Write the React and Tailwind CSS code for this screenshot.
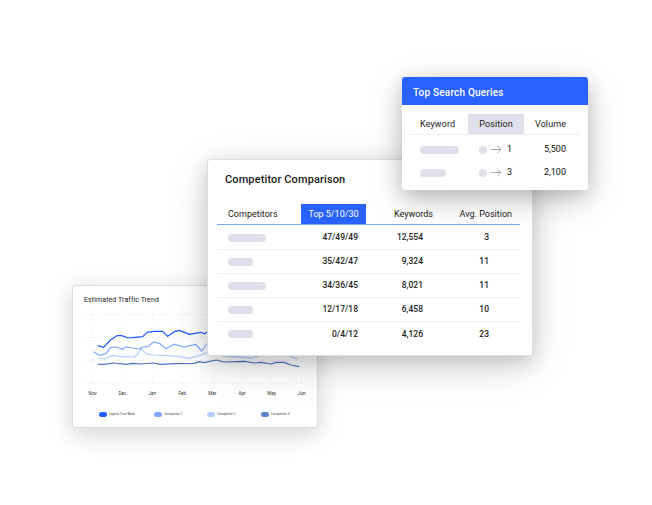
const font = { fontFamily: 'Roboto, "Liberation Sans", sans-serif' };

const competitors = [
  { pill: 'w-[38px]', top: '47/49/49', keywords: '12,554', avg: '3' },
  { pill: 'w-[25px]', top: '35/42/47', keywords: '9,324', avg: '11' },
  { pill: 'w-[38px]', top: '34/36/45', keywords: '8,021', avg: '11' },
  { pill: 'w-[25px]', top: '12/17/18', keywords: '6,458', avg: '10' },
  { pill: 'w-[25px]', top: '0/4/12', keywords: '4,126', avg: '23' },
];

const queries = [
  { pill: 'w-[39px]', pos: '1', volume: '5,500' },
  { pill: 'w-[26px]', pos: '3', volume: '2,100' },
];

const months = [
  ['Nov', 95], ['Dec', 184], ['Jan', 274], ['Feb', 364],
  ['Mar', 454], ['Apr', 543], ['May', 632], ['Jun', 722],
];

// points read off the reference at 3x, relative to (60,275)
const series = [
  {
    color: '#4d74c4',
    pts: [[110,268],[130,268],[155,264],[195,268],[215,265],[240,267],[275,264],[300,268],[340,266],[400,265],[415,260],[430,263],[465,255],[490,261],[550,259],[580,264],[600,262],[630,267],[645,262],[670,262],[690,270],[715,275]],
  },
  {
    color: '#b5cdff',
    pts: [[110,249],[130,252],[155,241],[180,245],[220,246],[230,238],[240,222],[255,236],[275,240],[310,241],[350,244],[385,250],[410,243],[440,233],[470,240],[500,245],[550,247],[570,250],[600,240],[685,240],[695,248],[710,252]],
  },
  {
    color: '#7fa9ff',
    pts: [[98,230],[115,241],[135,236],[148,218],[165,216],[185,223],[195,216],[235,222],[245,216],[260,215],[278,201],[295,205],[315,221],[340,208],[370,216],[405,208],[422,228],[440,204],[470,210]],
  },
  {
    color: '#1f5cff',
    pts: [[110,212],[128,217],[148,195],[168,182],[182,182],[202,189],[222,187],[245,185],[258,172],[280,169],[305,169],[320,184],[340,170],[355,166],[385,178],[420,172],[430,177],[445,165],[470,170]],
  },
];

const legend = [
  { label: 'Capital Trust Bank', color: 'bg-[#1f5cff]', w: 'w-[55px]' },
  { label: 'Competitor 1', color: 'bg-[#7fa9ff]', w: 'w-[53px]' },
  { label: 'Competitor 2', color: 'bg-[#b5cdff]', w: 'w-[54px]' },
  { label: 'Competitor 3', color: 'bg-[#5f82c9]', w: 'w-[50px]' },
];

const toX = (x) => x / 3 + 60;
const toY = (y) => y / 3 + 275;

function TrendChart() {
  return (
    <svg width="228" height="88" viewBox="84 310 228 88" className="ml-[12px] mt-[5px] block">
      {[118, 187, 256, 325].map((y) => (
        <line key={y} x1={toX(75)} x2={toX(740)} y1={toY(y)} y2={toY(y)} stroke="#d9d9dd" strokeWidth="0.6" strokeDasharray="1 2" />
      ))}
      {months.map(([m, x]) => (
        <line key={m} x1={toX(x)} x2={toX(x)} y1={toY(105)} y2={toY(325)} stroke="#e2e2e6" strokeWidth="0.6" strokeDasharray="1 2" />
      ))}
      {series.map((s) => (
        <polyline
          key={s.color}
          fill="none"
          stroke={s.color}
          strokeWidth="1.2"
          strokeLinejoin="round"
          points={s.pts.map(([x, y]) => `${toX(x)},${toY(y)}`).join(' ')}
        />
      ))}
      {months.map(([m, x]) => (
        <text key={m} x={toX(x)} y={394.5} textAnchor="middle" fontSize="4.6" fill="#333">{m}</text>
      ))}
    </svg>
  );
}

function SmallArrow() {
  return (
    <svg width="11" height="9" viewBox="0 0 11 9" fill="none" stroke="#9a9aa6" strokeWidth="0.9" className="ml-[4px] shrink-0">
      <path d="M0 4.5H10M6.2 0.8L10 4.5L6.2 8.2" />
    </svg>
  );
}

export default function App() {
  return (
    <div className="relative h-[505px] w-[652px] overflow-hidden bg-white" style={font}>
      {/* traffic chart card */}
      <div className="absolute left-[72px] top-[285px] h-[143px] w-[246px] rounded-[3px] border border-[#dcdcdc] bg-white shadow-[0_6px_24px_rgba(0,0,0,0.18)]">
        <div className="pl-[11px] pt-[9px] text-[7px] leading-[10px] tracking-[0.1px] text-[#222]">Estimated Traffic Trend</div>
        <TrendChart />
        <div className="ml-[26px] mt-[14px] flex">
          {legend.map((l) => (
            <div key={l.label} className={`flex items-center gap-[2px] ${l.w} shrink-0`}>
              <span className={`h-[5px] w-[8px] shrink-0 rounded-full ${l.color}`} />
              <span className="whitespace-nowrap text-[3.2px] leading-[5px] text-[#444]">{l.label}</span>
            </div>
          ))}
        </div>
      </div>

      {/* competitor table card */}
      <div className="absolute left-[207px] top-[159px] h-[197px] w-[326px] rounded-[3px] border border-[#dedede] bg-white pl-[9px] pr-[12px] shadow-[0_6px_18px_rgba(0,0,0,0.14),0_10px_40px_rgba(0,0,0,0.16)]">
        <div className="pl-[8px] pt-[13px] text-[11px] font-medium leading-[14px] tracking-[0.12px] text-[#1a1a1a]">Competitor Comparison</div>
        <div className="mt-[17px] grid grid-cols-[84px_65px_74px_80px] text-[9px] leading-[20px] text-[#222]">
          <div className="pl-[11px]">Competitors</div>
          <div className="bg-[#2962ff] text-center text-white">Top 5/10/30</div>
          <div className="pr-[7px] text-right">Keywords</div>
          <div className="pr-[8px] text-right">Avg. Position</div>
        </div>
        <div className="mb-[1px] h-[1px] bg-[#7fa5fb]" />
        {competitors.map((row, i) => (
          <div
            key={row.top}
            className={`grid h-[24px] grid-cols-[84px_65px_74px_80px] items-center text-[8.5px] font-medium text-[#222] ${i < competitors.length - 1 ? 'border-b border-[#eeeef3]' : ''}`}
          >
            <div className="pl-[11px]">
              <div className={`h-[8px] rounded-full bg-[#dfe0ea] ${row.pill}`} />
            </div>
            <div className="pr-[8px] text-right">{row.top}</div>
            <div className="pr-[17px] text-right">{row.keywords}</div>
            <div className="pr-[31px] text-right">{row.avg}</div>
          </div>
        ))}
      </div>

      {/* search queries card */}
      <div className="absolute left-[402px] top-[77px] h-[113px] w-[186px] overflow-hidden rounded-[3px] bg-white shadow-[0_6px_18px_rgba(0,0,0,0.16),0_10px_36px_rgba(0,0,0,0.18)]">
        <div className="flex h-[28px] items-center bg-[#2962ff] pl-[11px] pt-[3px] text-[10px] font-medium tracking-[0.2px] text-white">Top Search Queries</div>
        <div className="mx-[7px] mt-[9px]">
          <div className="grid grid-cols-[59px_56px_53px] border-b border-[#eeeef3] text-[9px] leading-[20px] tracking-[0.1px] text-[#222]">
            <div className="pl-[11px]">Keyword</div>
            <div className="bg-[#e0e1ea] text-center">Position</div>
            <div className="pl-[11px]">Volume</div>
          </div>
          {queries.map((q, i) => (
            <div key={q.pos} className={`grid h-[23px] grid-cols-[59px_56px_53px] items-center text-[9px] text-[#111] ${i === 0 ? 'mt-[3px]' : ''}`}>
              <div className="pl-[11px]">
                <div className={`h-[8px] rounded-full bg-[#dfe0ea] ${q.pill}`} />
              </div>
              <div className="flex items-center pl-[11px]">
                <span className="h-[8px] w-[8px] shrink-0 rounded-full bg-[#dfe0ea]" />
                <SmallArrow />
                <span className="ml-[5px]">{q.pos}</span>
              </div>
              <div className="pr-[11px] text-right">{q.volume}</div>
            </div>
          ))}
        </div>
      </div>
    </div>
  );
}
